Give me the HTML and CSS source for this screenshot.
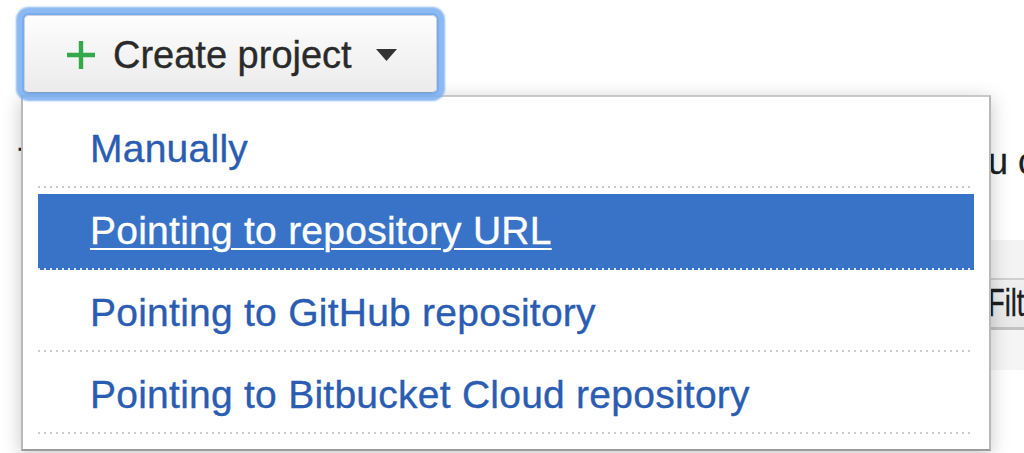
FILE: index.html
```html
<!DOCTYPE html>
<html lang="en">
<head>
<meta charset="utf-8">
<title>Create project</title>
<link rel="stylesheet" href="styles.css">
</head>
<body>
<div class="page">
  <div class="toolbar">
    <button class="create-btn" type="button">
      <svg class="plus" width="30" height="30" viewBox="0 0 30 30" aria-hidden="true"><path d="M15 1v28M1 15h28" stroke="#35a84b" stroke-width="4.4" fill="none"/></svg>
      <span class="create-label">Create project</span>
      <svg class="caret" width="21" height="12" viewBox="0 0 21 12" aria-hidden="true"><polygon points="0,0 21,0 10.5,12" fill="#333"/></svg>
    </button>
  </div>

  <p class="intro"><span class="intro-lead">To get started, create a new project, or if</span><span class="intro-rest">you can import one</span></p>

  <div class="band"></div>
  <div class="filter-row"><span class="filter-label">Projects</span><span class="filter-text">Filter projects</span></div>
  <div class="list-head"></div>

  <ul class="menu">
    <li class="menu-item"><a href="#">Manually</a></li>
    <li class="menu-item is-active"><a href="#">Pointing to repository URL</a></li>
    <li class="menu-item"><a href="#">Pointing to GitHub repository</a></li>
    <li class="menu-item"><a href="#">Pointing to Bitbucket Cloud repository</a></li>
  </ul>
</div>
</body>
</html>
```

FILE: styles.css
```css
html, body {
  margin: 0;
  padding: 0;
  background: #ffffff;
  overflow: hidden;
}

body {
  font-family: "Liberation Sans", Arial, Helvetica, sans-serif;
  color: #222;
}

.page {
  position: relative;
  width: 1024px;
  height: 453px;
  padding-top: 15px;
  box-sizing: border-box;
  overflow: hidden;
}

.toolbar {
  padding-left: 24px;
  display: flex;
}

.create-btn {
  position: relative;
  z-index: 2;
  width: 413px;
  height: 78px;
  box-sizing: border-box;
  padding: 2px 39px 0 41px;
  display: flex;
  align-items: center;
  border: 1px solid #c9d2dc;
  border-bottom-color: #7f9cc2;
  border-radius: 5px;
  background: linear-gradient(#fdfdfd, #ebebeb);
  box-shadow: 0 0 0 2px #78acec, 0 0 2px 8px rgba(120, 173, 238, 0.85);
  font-family: inherit;
  font-size: 38px;
  color: #2a2a2a;
  -webkit-text-stroke: 0.35px #2a2a2a;
  cursor: pointer;
}

.plus {
  flex: none;
  display: block;
}

.create-label {
  margin-left: 17px;
  white-space: nowrap;
}

.caret {
  flex: none;
  display: block;
  margin-left: 24px;
}

.intro {
  margin: 47px 0 0 18px;
  font-size: 36px;
  line-height: 44px;
  display: flex;
  white-space: nowrap;
  color: #1e1e1e;
  -webkit-text-stroke: 0.3px #1e1e1e;
}

.intro-lead {
  width: 932px;
  overflow: hidden;
  flex: none;
}

.band {
  margin: 56px 0 0 24px;
  height: 38px;
  background: #f3f3f3;
  border-bottom: 2px solid #cfcfcf;
}

.filter-row {
  margin-left: 24px;
  height: 47px;
  display: grid;
  grid-template-columns: 964px 1fr;
  background: linear-gradient(#f0f0f0, #e8e8e8);
  border-bottom: 3px solid #c2c2c2;
  font-size: 38px;
  line-height: 47px;
  white-space: nowrap;
  color: #1e1e1e;
}

.filter-label {
  padding-left: 20px;
}

.filter-text {
  display: block;
  transform: scaleX(0.72);
  transform-origin: left center;
  -webkit-text-stroke: 0.4px #1e1e1e;
}

.list-head {
  margin-left: 24px;
  height: 40px;
  background: #f5f5f5;
}

.menu {
  position: absolute;
  z-index: 1;
  left: 21px;
  top: 95px;
  width: 970px;
  box-sizing: border-box;
  margin: 0;
  padding: 9px 15px 15px;
  list-style: none;
  background: #ffffff;
  border: 2px solid #b9b9b9;
  border-top-color: #c8c8c8;
  border-bottom-color: #9c9c9c;
  box-shadow: 0 4px 18px rgba(0, 0, 0, 0.22);
}

.menu-item {
  margin-top: 6px;
  height: 76px;
  box-sizing: border-box;
  padding-bottom: 2px;
  background-image: linear-gradient(to right, #cbcbcb 2px, transparent 2px);
  background-size: 6px 2px;
  background-position: 0 100%;
  background-repeat: repeat-x;
}

.menu-item a {
  display: block;
  height: 74px;
  line-height: 74px;
  padding-left: 52px;
  font-size: 39px;
  letter-spacing: 0.25px;
  color: #2a5db2;
  -webkit-text-stroke: 0.35px #2a5db2;
  text-decoration: none;
  white-space: nowrap;
}

.menu-item.is-active {
  background-color: #3873c8;
  background-image: linear-gradient(to right, #dfe8f6 2px, transparent 2px);
}

.menu-item.is-active a {
  color: #ffffff;
  -webkit-text-stroke: 0.35px #ffffff;
  text-decoration: underline;
  text-decoration-thickness: 2px;
  text-underline-offset: 4px;
}
```
